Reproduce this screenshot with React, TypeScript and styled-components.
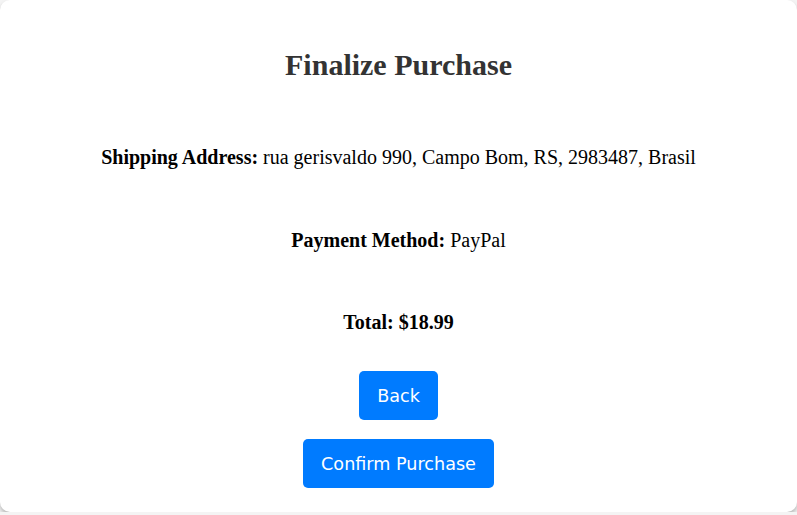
import React from "react";
import styled, { createGlobalStyle } from "styled-components";

const Global = createGlobalStyle`
  html, body { margin: 0; padding: 0; }
  body { background: #f4f4f4; font-family: "Liberation Serif", "Times New Roman", serif; }
`;

const Card = styled.div`
  box-sizing: border-box;
  width: 797px;
  height: 512px;
  background: #ffffff;
  border-radius: 10px;
  box-shadow: 0 3px 4px rgba(0, 0, 0, 0.25);
  display: flex;
  flex-direction: column;
  align-items: center;
  padding-top: 47px;
`;

const Title = styled.h2`
  margin: 0;
  font-size: 30px;
  line-height: 36px;
  font-weight: bold;
  color: #333333;
`;

const Info = styled.p<{ $top: number }>`
  margin: ${(p) => p.$top}px 0 0;
  font-size: 20px;
  line-height: 23px;
  color: #000000;
  text-align: center;
`;

const Button = styled.button<{ $top: number }>`
  margin-top: ${(p) => p.$top}px;
  background: #007bff;
  color: #ffffff;
  border: none;
  border-radius: 5px;
  height: 49px;
  padding: 0 18px;
  font-family: "DejaVu Sans", Verdana, sans-serif;
  font-size: 17.6px;
  cursor: pointer;
`;

export default function App() {
  return (
    <>
      <Global />
      <Card>
        <Title>Finalize Purchase</Title>
        <Info $top={63}>
          <strong>Shipping Address:</strong> rua gerisvaldo 990, Campo Bom, RS, 2983487, Brasil
        </Info>
        <Info $top={60}>
          <strong>Payment Method:</strong> PayPal
        </Info>
        <Info $top={59}>
          <strong>Total: $18.99</strong>
        </Info>
        <Button $top={37}>Back</Button>
        <Button $top={19}>Confirm Purchase</Button>
      </Card>
    </>
  );
}
